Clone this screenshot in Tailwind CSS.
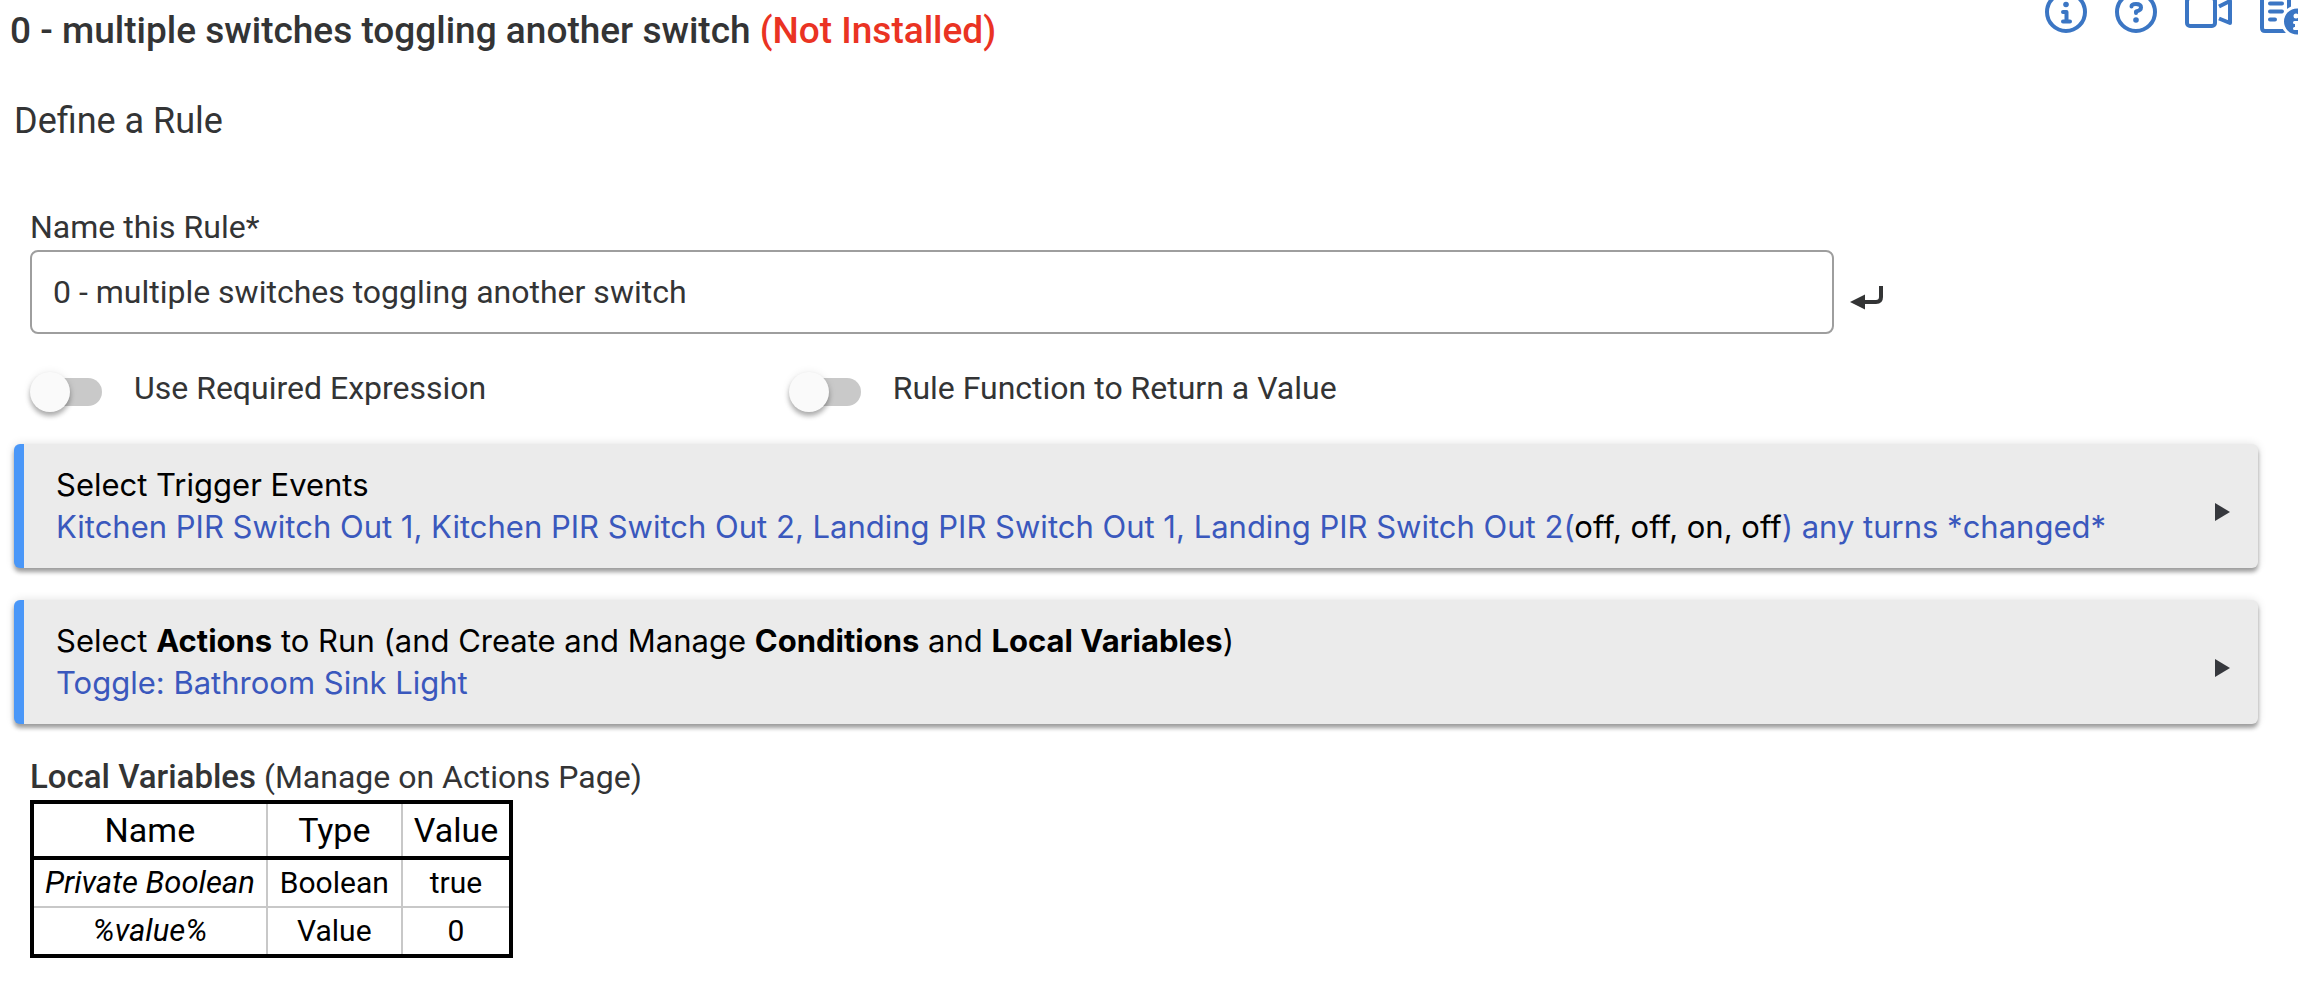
<!DOCTYPE html>
<html lang="en">
<head>
  <meta charset="UTF-8" />
  <meta name="viewport" content="width=device-width, initial-scale=1.0"/>
  <title>Rule Machine</title>
  <script src="https://cdn.jsdelivr.net/npm/@tailwindcss/browser@4"></script>
</head>
<body class="bg-white text-[#333435] font-[Roboto,sans-serif] text-[32px] leading-[42px] overflow-x-hidden">
  <header class="flex justify-between pl-[10px]">
    <h1 class="text-[37px] font-medium mt-[10px]">0 - multiple switches toggling another switch <span class="text-[#ea3323]">(Not Installed)</span></h1>
    <nav class="flex shrink-0 gap-[14px] -mt-4 -mr-[6px] text-[#3b76c4]">
      <a href="#" aria-label="Info">
        <svg class="size-14" viewBox="0 0 56 56" fill="none" stroke="currentColor" stroke-width="4" stroke-linecap="round" stroke-linejoin="round">
          <circle cx="28" cy="28" r="19"/>
          <path d="M25 28h3.500v9M25 37.500h7"/>
          <circle cx="28" cy="20.500" r="2.800" fill="currentColor" stroke="none"/>
        </svg>
      </a>
      <a href="#" aria-label="Help">
        <svg class="size-14" viewBox="0 0 56 56" fill="none" stroke="currentColor" stroke-width="4" stroke-linecap="round" stroke-linejoin="round">
          <circle cx="28" cy="28" r="19"/>
          <path d="M23.500 22.500Q23.500 20 28 20Q33 20 33 23.500Q33 26.500 28 27.500V29"/>
          <circle cx="28" cy="36" r="2.800" fill="currentColor" stroke="none"/>
        </svg>
      </a>
      <a href="#" aria-label="Video">
        <svg class="size-14" viewBox="0 0 56 56" fill="none" stroke="currentColor" stroke-width="4" stroke-linejoin="round">
          <rect x="9" y="14" width="28" height="28" rx="3"/>
          <path d="M41 22.500L52 17V39L41 34.500"/>
        </svg>
      </a>
      <a href="#" aria-label="Documentation">
        <svg class="size-14" viewBox="0 0 56 56" fill="none" stroke="currentColor" stroke-width="4" stroke-linecap="round">
          <path d="M41 24V10H14v34q0 3 3 3h24"/>
          <path d="M22 19.500h12M22 27.500h12M22 35.500h5"/>
          <circle cx="49" cy="37.500" r="14.500" fill="currentColor" stroke="white" stroke-width="3"/>
          <path d="M46.500 38.500h2v6M46.500 44.500h6" stroke="white" stroke-width="3"/>
          <circle cx="48" cy="32" r="2.500" fill="white" stroke="none"/>
        </svg>
      </a>
    </nav>
  </header>

  <main class="pl-[14px] pr-10">
    <h2 class="text-[36px] mt-12">Define a Rule</h2>

    <div class="pl-4">
      <label for="ruleName" class="block mt-16">Name this Rule*</label>
      <div class="flex items-center mt-0.5 pr-[374px]">
        <input id="ruleName" type="text" value="0 - multiple switches toggling another switch" class="flex-1 min-w-0 h-[84px] px-[21px] border-2 border-[#9e9e9e] rounded-lg">
        <button aria-label="Save name" class="ml-4">
          <svg class="w-[34px] h-6 mt-3" viewBox="0 0 34 24" fill="#333435">
            <path d="M0 16L15 8.500V23.500Z"/>
            <path d="M14 16H26Q31 16 31 11V0" fill="none" stroke="#333435" stroke-width="4"/>
          </svg>
        </button>
      </div>

      <div class="grid grid-cols-3 gap-x-2 mt-[30px] -mr-10">
        <label class="flex items-center gap-8">
          <span class="relative flex items-center w-[72px] h-10 mt-2">
            <input type="checkbox" class="peer appearance-none w-[62px] h-7 ml-[10px] rounded-full bg-[#c9c9c9]">
            <span class="absolute left-0 size-10 rounded-full bg-[#fafafa] shadow-[0_4px_5px_rgba(0,0,0,0.3),0_0_8px_rgba(0,0,0,0.08)] peer-checked:left-8"></span>
          </span>
          Use Required Expression
        </label>
        <label class="flex items-center gap-8">
          <span class="relative flex items-center w-[72px] h-10 mt-2">
            <input type="checkbox" class="peer appearance-none w-[62px] h-7 ml-[10px] rounded-full bg-[#c9c9c9]">
            <span class="absolute left-0 size-10 rounded-full bg-[#fafafa] shadow-[0_4px_5px_rgba(0,0,0,0.3),0_0_8px_rgba(0,0,0,0.08)] peer-checked:left-8"></span>
          </span>
          Rule Function to Return a Value
        </label>
      </div>
    </div>

    <button class="flex items-center justify-between w-full mt-8 pl-8 pr-[28px] py-5 text-left text-black font-[Inter,sans-serif] text-[31px] bg-[#ebebeb] border-l-10 border-[#4a97f8] rounded-md shadow-[0_4px_4px_rgba(0,0,0,0.35),0_0_10px_rgba(0,0,0,0.12)]">
      <span>
        Select Trigger Events<br>
        <span class="text-[#3a58bd]">Kitchen PIR Switch Out 1, Kitchen PIR Switch Out 2, Landing PIR Switch Out 1, Landing PIR Switch Out 2(<span class="text-black">off, off, on, off</span>) any turns *changed*</span>
      </span>
      <svg class="w-4 h-[18px] mt-3" viewBox="0 0 16 18" fill="#36383d"><path d="M1 0L16 9L1 18Z"/></svg>
    </button>

    <button class="flex items-center justify-between w-full mt-8 pl-8 pr-[28px] py-5 text-left text-black font-[Inter,sans-serif] text-[31px] bg-[#ebebeb] border-l-10 border-[#4a97f8] rounded-md shadow-[0_4px_4px_rgba(0,0,0,0.35),0_0_10px_rgba(0,0,0,0.12)]">
      <span>
        Select <b>Actions</b> to Run (and Create and Manage <b>Conditions</b> and <b>Local Variables</b>)<br>
        <span class="text-[#3a58bd]">Toggle: Bathroom Sink Light</span>
      </span>
      <svg class="w-4 h-[18px] mt-3" viewBox="0 0 16 18" fill="#36383d"><path d="M1 0L16 9L1 18Z"/></svg>
    </button>

    <div class="pl-4 mt-8">
      <p><span class="font-medium text-[33px]">Local Variables</span> (Manage on Actions Page)</p>
      <table class="mt-[2px] border-collapse border-4 border-black text-center text-black text-[30px]">
        <thead class="border-b-4 border-black text-[34px]">
          <tr class="h-14">
            <th class="px-[11px] font-normal border-r-2 border-r-[#c8c8c8]">Name</th>
            <th class="px-3 font-normal border-r-2 border-r-[#c8c8c8]">Type</th>
            <th class="px-[11px] font-normal">Value</th>
          </tr>
        </thead>
        <tbody>
          <tr class="h-[49px] border-b-2 border-[#c8c8c8]">
            <td class="px-[11px] italic text-[31px] border-r-2 border-r-[#c8c8c8]">Private Boolean</td>
            <td class="px-3 border-r-2 border-r-[#c8c8c8]">Boolean</td>
            <td class="px-[11px]">true</td>
          </tr>
          <tr class="h-[49px]">
            <td class="px-[11px] italic text-[31px] border-r-2 border-r-[#c8c8c8]">%value%</td>
            <td class="px-3 border-r-2 border-r-[#c8c8c8]">Value</td>
            <td class="px-[11px]">0</td>
          </tr>
        </tbody>
      </table>
    </div>
  </main>
</body>
</html>
